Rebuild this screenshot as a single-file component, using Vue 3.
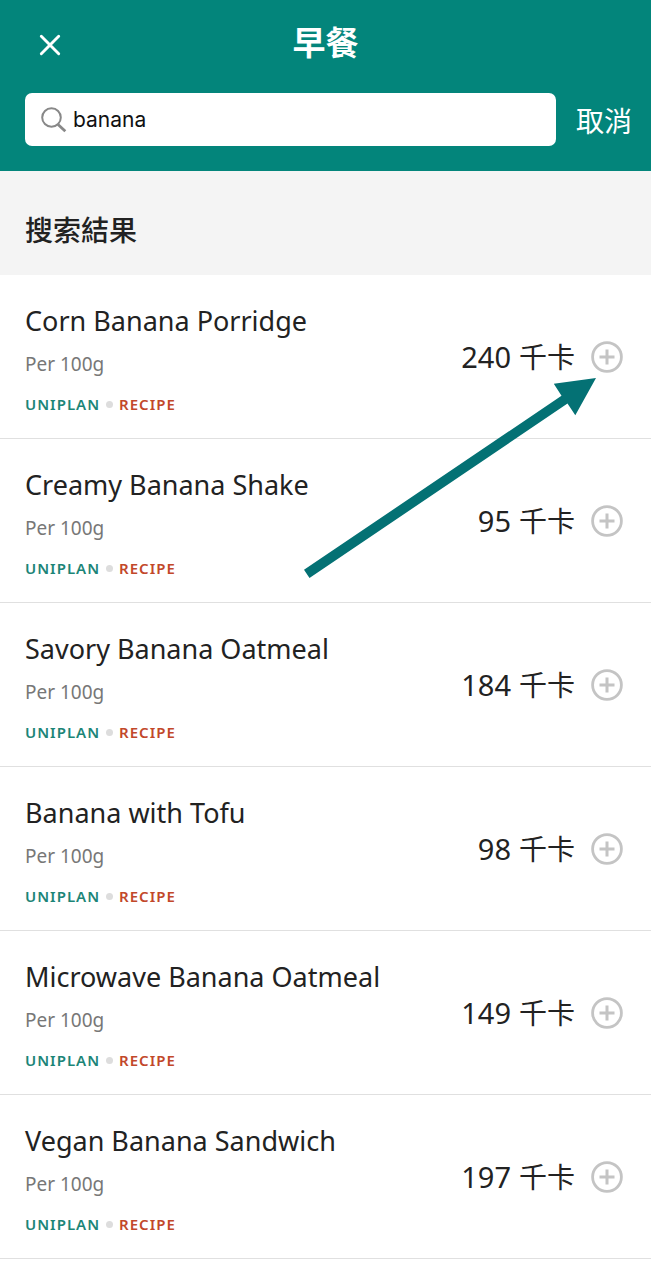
<script setup>
import { ref } from 'vue'

const query = ref('banana')

const results = [
  { name: 'Corn Banana Porridge', kcal: 240 },
  { name: 'Creamy Banana Shake', kcal: 95 },
  { name: 'Savory Banana Oatmeal', kcal: 184 },
  { name: 'Banana with Tofu', kcal: 98 },
  { name: 'Microwave Banana Oatmeal', kcal: 149 },
  { name: 'Vegan Banana Sandwich', kcal: 197 },
]
</script>

<template>
  <div class="screen" lang="zh-Hant">
    <header class="header">
      <div class="title-bar">
        <button class="close" type="button" aria-label="關閉">
          <svg width="22" height="22" viewBox="0 0 22 22" aria-hidden="true">
            <path d="M2.3 2.3 19.7 19.7M19.7 2.3 2.3 19.7" fill="none" stroke="#fff" stroke-width="2.9" stroke-linecap="round" />
          </svg>
        </button>
        <h1 class="title">早餐</h1>
      </div>
      <form class="search" role="search" @submit.prevent>
        <label class="field">
          <svg width="26" height="26" viewBox="0 0 26 26" aria-hidden="true">
            <circle cx="10.5" cy="10.5" r="9.3" fill="none" stroke="#888" stroke-width="2" />
            <path d="M17 17.4 24.3 24.3" fill="none" stroke="#888" stroke-width="2.8" />
          </svg>
          <input v-model="query" class="input" type="text" aria-label="搜索" />
        </label>
        <button class="cancel" type="button">取消</button>
      </form>
    </header>

    <main>
      <h2 class="section">搜索結果</h2>
      <div class="results">
        <ul class="list">
          <li v-for="item in results" :key="item.name" class="row">
            <div class="info">
              <h3 class="name">{{ item.name }}</h3>
              <p class="portion">Per 100g</p>
              <p class="tags">
                <span class="brand">UNIPLAN</span>
                <span class="dot"></span>
                <span class="kind">RECIPE</span>
              </p>
            </div>
            <p class="energy">
              <span class="amount">{{ item.kcal }}</span>
              <span class="unit">千卡</span>
            </p>
            <button class="add" type="button" :aria-label="'加入 ' + item.name">
              <svg width="32" height="32" viewBox="0 0 32 32" aria-hidden="true">
                <circle cx="16" cy="16" r="14.4" fill="none" stroke="#c4c4c4" stroke-width="2.8" />
                <path d="M16 8.5V23.5M8.5 16H23.5" fill="none" stroke="#c4c4c4" stroke-width="3" />
              </svg>
            </button>
          </li>
        </ul>
        <svg class="arrow" width="292" height="200" viewBox="304 378 292 200" aria-hidden="true">
          <path d="M596 378 575.3 415.3 567.5 403.6 309.5 578 304 569.8 561.5 395.8 553.8 383.8Z" fill="#047174" />
        </svg>
      </div>
    </main>
  </div>
</template>

<style>
body {
  margin: 0;
  background: #fff;
}
</style>

<style scoped>
.screen {
  min-height: 100vh;
  background: #fff;
  color: #222;
  font-family: "Noto Sans", "Noto Sans CJK TC", sans-serif;
}

button {
  padding: 0;
  border: 0;
  background: none;
  font: inherit;
  color: inherit;
}

.header {
  box-sizing: border-box;
  padding: 16px 19px 25px 25px;
  background: #03857b;
  color: #fff;
}

.title-bar {
  display: grid;
  grid-template-columns: 50px 1fr 56px;
  align-items: start;
  margin-bottom: 19px;
}

.close {
  display: grid;
  place-items: center;
  height: 58px;
}

.title {
  margin: 0;
  text-align: center;
  font-family: "Noto Sans CJK TC", sans-serif;
  font-size: 33px;
  line-height: 50px;
  font-weight: 700;
}

.search {
  display: flex;
  align-items: center;
  gap: 20px;
}

.field {
  flex: 1;
  display: flex;
  align-items: center;
  gap: 6px;
  box-sizing: border-box;
  min-width: 0;
  height: 53px;
  padding: 0 16px;
  border-radius: 7px;
  background: #fff;
}

.input {
  flex: 1;
  min-width: 0;
  padding: 0;
  border: 0;
  outline: 0;
  background: none;
  color: #111;
  font-family: Inter, sans-serif;
  font-size: 21px;
  line-height: 32px;
}

.cancel {
  font-family: "Noto Sans CJK TC", sans-serif;
  font-size: 28px;
  line-height: 40px;
  font-weight: 400;
}

.section {
  margin: 0;
  padding: 38px 25px 26px;
  background: #f4f4f4;
  font-family: "Noto Sans CJK TC", sans-serif;
  font-size: 28px;
  line-height: 40px;
  font-weight: 500;
}

.results {
  position: relative;
}

.list {
  margin: 0;
  padding: 0;
  list-style: none;
}

.row {
  display: flex;
  align-items: center;
  padding: 0 28px 0 25px;
  border-bottom: 1px solid #e0e0e0;
}

.info {
  flex: 1;
  min-width: 0;
  padding: 27px 0 18px;
}

.name {
  margin: 0 0 8px;
  font-size: 27px;
  line-height: 38px;
  font-weight: 400;
}

.portion {
  margin: 0 0 8px;
  color: #777;
  font-size: 19px;
  line-height: 32px;
}

.tags {
  display: flex;
  align-items: center;
  margin: 0;
  font-size: 15px;
  line-height: 32px;
  font-weight: 600;
  letter-spacing: 1px;
}

.brand {
  color: #1c8577;
}

.kind {
  color: #c2482a;
}

.dot {
  width: 7px;
  height: 7px;
  margin: 0 6px;
  border-radius: 50%;
  background: #ddd;
}

.energy {
  display: flex;
  align-items: baseline;
  gap: 8px;
  margin: 0 16px 0 0;
  font-size: 28px;
  line-height: 40px;
  white-space: nowrap;
}

.amount {
  font-size: 29px;
}

.add,
.add svg {
  display: block;
}

.arrow {
  position: absolute;
  top: 103px;
  right: 55px;
  pointer-events: none;
}
</style>
